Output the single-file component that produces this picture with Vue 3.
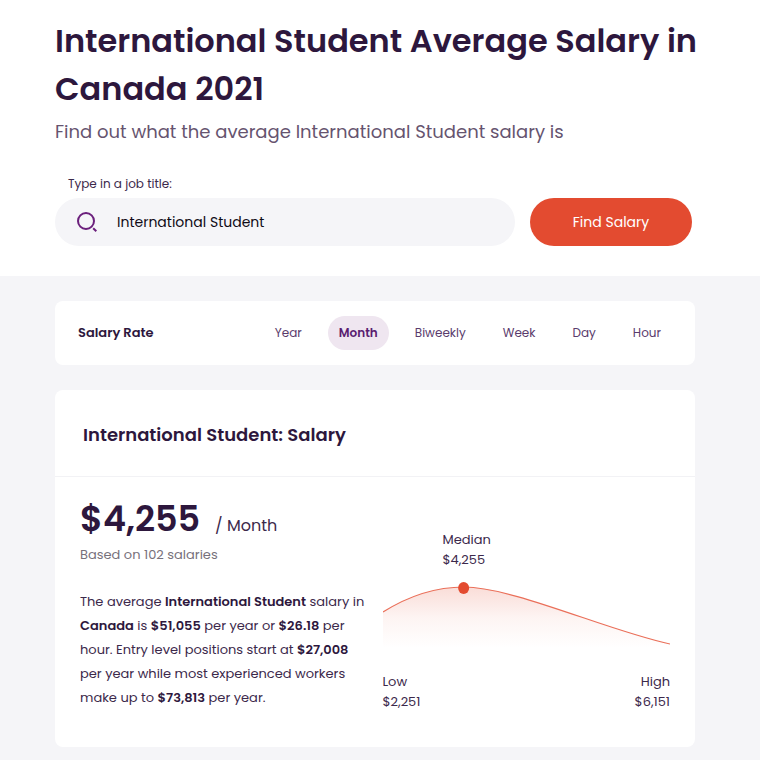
<script setup>
import { ref } from 'vue'

const jobTitle = ref('International Student')
const rates = ['Year', 'Month', 'Biweekly', 'Week', 'Day', 'Hour']
const activeRate = ref('Month')
</script>

<template>
  <div class="page">
    <header class="hero">
      <h1>International Student Average Salary in Canada 2021</h1>
      <p class="subtitle">Find out what the average International Student salary is</p>
      <form class="search" @submit.prevent>
        <label for="job-title">Type in a job title:</label>
        <div class="search-row">
          <div class="search-box">
            <svg class="search-icon" width="22" height="22" viewBox="0 0 22 22" fill="none" aria-hidden="true">
              <circle cx="10" cy="10" r="8" stroke="#6b1f7c" stroke-width="2" />
              <path d="M17.2 17.2L20.3 20.3" stroke="#6b1f7c" stroke-width="2" />
            </svg>
            <input id="job-title" v-model="jobTitle" type="text" />
          </div>
          <button class="submit" type="submit">Find Salary</button>
        </div>
      </form>
    </header>

    <main class="content">
      <section class="card rate">
        <h2>Salary Rate</h2>
        <div class="tabs">
          <button
            v-for="rate in rates"
            :key="rate"
            type="button"
            class="tab"
            :class="{ active: rate === activeRate }"
            @click="activeRate = rate"
          >{{ rate }}</button>
        </div>
      </section>

      <section class="card">
        <h2 class="card-title">International Student: Salary</h2>
        <div class="card-body">
          <div class="summary">
            <div class="amount"><strong>$4,255</strong><span>/ Month</span></div>
            <p class="based">Based on 102 salaries</p>
            <p class="description">
              The average <b>International Student</b> salary in <b>Canada</b> is <b>$51,055</b> per year or
              <b>$26.18</b> per hour. Entry level positions start at <b>$27,008</b> per year while most
              experienced workers make up to <b>$73,813</b> per year.
            </p>
          </div>
          <div class="chart">
            <div class="median">Median<br />$4,255</div>
            <svg class="curve" viewBox="0 0 287 72" aria-hidden="true">
              <defs>
                <linearGradient id="curve-fill" x1="0" y1="7" x2="0" y2="68" gradientUnits="userSpaceOnUse">
                  <stop offset="0" stop-color="#e34b30" stop-opacity="0.19" />
                  <stop offset="0.5" stop-color="#e34b30" stop-opacity="0.06" />
                  <stop offset="1" stop-color="#e34b30" stop-opacity="0" />
                </linearGradient>
              </defs>
              <path d="M0 32C27 15 54 7 81 7C130 7 225 51 287 64V72H0Z" fill="url(#curve-fill)" />
              <path d="M0 32C27 15 54 7 81 7C130 7 225 51 287 64" fill="none" stroke="#ea6f59" stroke-width="1.2" />
              <ellipse cx="80.5" cy="8" rx="5.5" ry="6" fill="#e34b30" />
            </svg>
            <div class="range">
              <div>Low<br />$2,251</div>
              <div class="high">High<br />$6,151</div>
            </div>
          </div>
        </div>
      </section>
    </main>
  </div>
</template>

<style>
body {
  margin: 0;
  background: #f5f5f8;
}
</style>

<style scoped>
.page {
  font-family: Poppins, Inter, "Open Sans", sans-serif;
  font-size: 13px;
  font-weight: 400;
  color: #3c294b;
}

h1,
h2,
p {
  margin: 0;
}

h1,
h2,
b,
strong {
  color: #2d173d;
}

button,
input {
  font-family: inherit;
  border: 0;
}

.hero {
  background: #fff;
  padding: 17px 60px 30px 55px;
}

h1 {
  font-size: 32px;
  line-height: 48px;
  font-weight: 600;
}

.subtitle {
  margin-top: 5px;
  font-size: 18px;
  line-height: 28px;
  color: #66546f;
}

.search {
  padding: 30px 8px 0 0;
}

.search label {
  display: block;
  padding-left: 13px;
  font-size: 12px;
  line-height: 16px;
  margin-bottom: 6px;
}

.search-row {
  display: flex;
  gap: 15px;
}

.search-box {
  flex: 1;
  display: flex;
  align-items: center;
  gap: 19px;
  min-width: 0;
  height: 48px;
  padding: 0 21px;
  box-sizing: border-box;
  border-radius: 24px;
  background: #f5f5f8;
}

.search-icon {
  flex: none;
}

.search-box input {
  flex: 1;
  min-width: 0;
  padding: 0;
  background: transparent;
  color: #100b16;
  font-size: 14px;
  font-weight: 400;
  line-height: 24px;
  outline: none;
}

.submit {
  width: 162px;
  height: 48px;
  border-radius: 24px;
  background: #e34b30;
  color: #fff;
  font-size: 14px;
  font-weight: 400;
}

.content {
  display: grid;
  gap: 25px;
  padding: 25px 65px 13px 55px;
}

.card {
  background: #fff;
  border-radius: 8px;
}

.rate {
  display: flex;
  align-items: center;
  justify-content: space-between;
  height: 64px;
  padding: 0 23px;
}

.rate h2 {
  font-size: 13px;
  font-weight: 600;
}

.tabs {
  display: flex;
  gap: 15px;
}

.tab {
  height: 34px;
  padding: 0 11px;
  border-radius: 17px;
  background: transparent;
  color: #5a3b6c;
  font-size: 12px;
  font-weight: 400;
}

.tab.active {
  background: #efe6f0;
  color: #5a1d70;
  font-weight: 600;
}

.card-title {
  padding: 32px 28px 28px;
  border-bottom: 1px solid #f2f2f5;
  font-size: 18px;
  line-height: 26px;
  font-weight: 600;
}

.card-body {
  display: grid;
  grid-template-columns: minmax(0, 1fr) minmax(0, 1fr);
  gap: 15px;
  padding: 18px 25px 35px;
}

.amount {
  display: flex;
  align-items: baseline;
  gap: 15px;
}

.amount strong {
  font-size: 35px;
  line-height: 48px;
  font-weight: 600;
}

.amount span {
  font-size: 16px;
}

.based {
  line-height: 24px;
  color: #77717b;
}

.description {
  margin-top: 23px;
  line-height: 24px;
}

.description b {
  font-weight: 600;
}

.chart {
  padding-top: 35px;
  line-height: 20px;
}

.median {
  padding-left: 60px;
}

.curve {
  display: block;
  width: 100%;
  margin: 10px 0 20px;
}

.range {
  display: flex;
  justify-content: space-between;
}

.high {
  text-align: right;
}
</style>
